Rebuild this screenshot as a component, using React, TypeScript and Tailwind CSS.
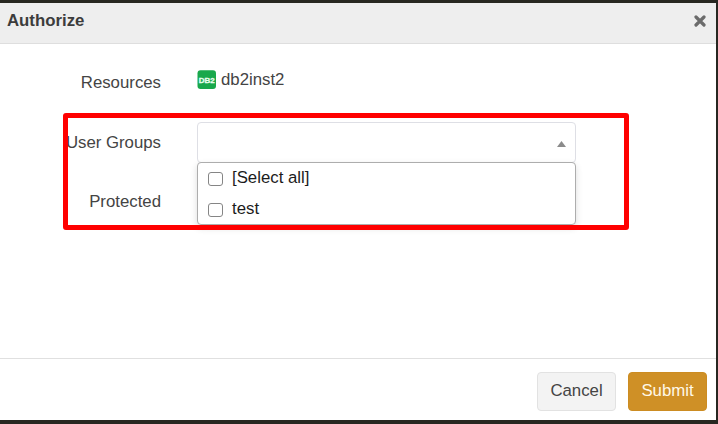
import React from 'react';

function Field({ label, className, children }: { label: string; className: string; children?: React.ReactNode }) {
  return (
    <div className={`flex items-start ${className}`}>
      <div className="w-[161px] shrink-0 text-right leading-5 whitespace-nowrap">{label}</div>
      {children}
    </div>
  );
}

function Option({ label }: { label: string }) {
  return (
    <label className="flex h-[31px] items-center gap-[9px] pl-[10px] text-[#1c1c1c]">
      <span className="mt-[3px] h-[14px] w-[15px] rounded-[3px] border border-[#858585] bg-white" />
      <span className="leading-5">{label}</span>
    </label>
  );
}

export default function App() {
  return (
    <div className="h-[424px] w-[718px] overflow-hidden bg-[#272721] pt-[3px] pr-[2px] pb-1 font-['Liberation_Sans',Arial,sans-serif] text-[16.8px] text-[#444]">
      <div className="relative flex h-[417px] flex-col bg-white">
        <header className="flex h-[41px] shrink-0 items-center justify-between border-b border-[#dedede] bg-[#eee] pr-[10px] pb-[5px] pl-[7px]">
          <h1 className="leading-5 font-bold text-[#3c3c3c]">Authorize</h1>
          <svg className="mt-[1px] h-3 w-3" viewBox="0 0 12 12" fill="none" stroke="#6b6b6b" strokeWidth="3.2" strokeLinecap="round">
            <path d="M2 2 10 10M10 2 2 10" />
          </svg>
        </header>

        <main className="flex-1">
          <Field label="Resources" className="mt-[29px] h-[60px]">
            <div className="-mt-[3px] ml-[36px] flex items-start gap-[5px] leading-5">
              <svg className="h-[19px] w-[19px]" viewBox="0 0 19 19">
                <rect x="0.5" y="0.3" width="18.5" height="18.7" rx="3" fill="#18a84b" />
                <text x="9.8" y="12.8" textAnchor="middle" textLength="16" lengthAdjust="spacingAndGlyphs" fontSize="8" fontWeight="700" fill="#e9fff0" stroke="#e9fff0" strokeWidth="0.3">DB2</text>
              </svg>
              <span>db2inst2</span>
            </div>
          </Field>
          <Field label="User Groups" className="h-[59px]">
            <div className="relative -mt-[11px] ml-[36px] h-[41px] w-[379px] rounded-[4px] border border-[#dedfe5] bg-white">
              <svg className="absolute top-[18px] right-[9px] h-[6px] w-[9px]" viewBox="0 0 9 6">
                <path d="M4.5 0 9 6H0Z" fill="#8b8b8b" />
              </svg>
              <div className="absolute top-[39px] -left-px z-10 h-[63px] w-[379px] rounded-[4px] border border-[#adadad] bg-white shadow-[0_3px_7px_rgba(0,0,0,0.14)]">
                <div className="-mt-px">
                  <Option label="[Select all]" />
                  <Option label="test" />
                </div>
              </div>
            </div>
          </Field>
          <Field label="Protected" className="h-[30px]" />
        </main>

        <footer className="flex h-[62px] shrink-0 items-start justify-end gap-3 border-t border-[#e0e0e0] pt-[13px] pr-[9px]">
          <button className="h-[39px] w-[79px] rounded-[4px] border border-[#e2e2e2] bg-[#f3f3f3] pb-[2px] text-[#444]">Cancel</button>
          <button className="h-[39px] w-[79px] rounded-[4px] border border-[#cc8c22] bg-[#cf9026] pb-[2px] text-[#fff8e8]">Submit</button>
        </footer>

        <div className="pointer-events-none absolute top-[110px] left-[63px] z-20 h-[117px] w-[566px] rounded-[3px] border-5 border-[#ff0000]" />
      </div>
    </div>
  );
}
